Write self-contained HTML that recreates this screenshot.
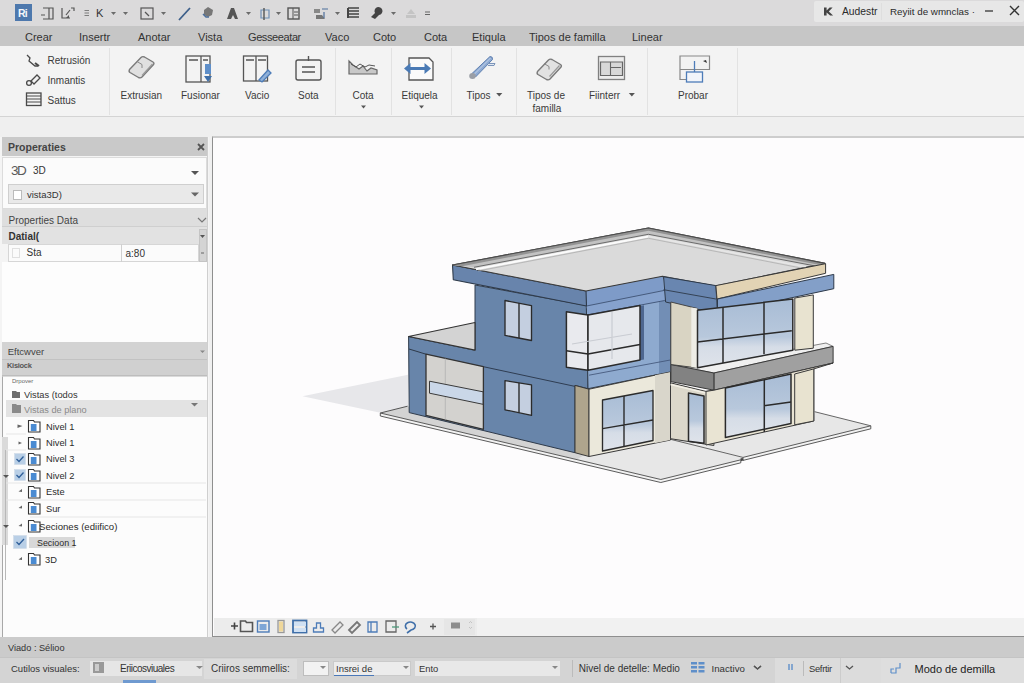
<!DOCTYPE html>
<html><head><meta charset="utf-8">
<style>
*{margin:0;padding:0;box-sizing:border-box}
html,body{width:1024px;height:683px;overflow:hidden;background:#f0f0f0;font-family:"Liberation Sans",sans-serif;color:#333}
.a{position:absolute}
.t{position:absolute;white-space:nowrap;font-size:10px;line-height:12px;color:#2a2a2a}
#qat{left:0;top:0;width:1024px;height:26px;background:#dbdadb}
#tabs{left:0;top:26px;width:1024px;height:20px;background:#c6c6c6}
#ribbon{left:0;top:46px;width:1024px;height:71px;background:#f3f3f3;border-bottom:1px solid #d4d4d4}
#strip{left:0;top:117px;width:1024px;height:20px;background:#efefef}
.sep{position:absolute;top:48px;width:1px;height:67px;background:#e2e2e2}
.tab{position:absolute;top:31px;font-size:11px;line-height:12px;color:#333;white-space:nowrap}
.rl{position:absolute;font-size:10px;line-height:12px;color:#3a3a3a;white-space:nowrap}
svg{position:absolute;overflow:visible}
.dd{position:absolute;font-size:8px;color:#666;line-height:8px}
</style></head><body>
<div id="qat" class="a"></div>
<div id="tabs" class="a"></div>
<div id="ribbon" class="a"></div>
<div id="strip" class="a"></div>

<!-- QAT -->
<div class="a" style="left:15px;top:4px;width:17px;height:17px;background:#4d78ad"></div>
<div class="a" style="left:18px;top:7.5px;color:#f4f6fa;font-size:10.5px;font-weight:bold;line-height:11px;letter-spacing:-0.8px">Ri</div>
<div class="t" style="left:96px;top:6.5px;font-size:11px;color:#333">K</div>
<svg style="left:0;top:0" width="1024" height="27">
 <g fill="none" stroke="#555" stroke-width="1.2">
  <path d="M43 8h10v11h-10M49 8v11M41 15h4"/>
  <path d="M62 8v10h8M66 15l4-5M71 8l3 0l0 3"/>
  <path d="M84.5 10.5h4.5M84.5 13h4.5M84.5 15.5h4.5" stroke-width="0.8" stroke="#666"/>
  
  <rect x="141" y="8" width="12" height="11"/>
  <path d="M145 12l4 4" />
  <path d="M179 20l11-12" stroke="#3d5f8a" stroke-width="1.8"/>
 </g>
 <path d="M66 18l3-3v3z" fill="#555"/>
 <g fill="#6b6b6b">
  <path d="M111 12h5l-2.5 3z"/><path d="M123 12h5l-2.5 3z"/><path d="M161 12h5l-2.5 3z"/>
  <path d="M246 12h5l-2.5 3z"/><path d="M276 12h5l-2.5 3z"/><path d="M335 12h5l-2.5 3z"/><path d="M391 12h5l-2.5 3z"/>
 </g>
 <g>
  <path d="M204 10l4-3 5 3-1 5-4 2-4-2z" fill="#777"/><path d="M203 14l3 3h3" fill="none" stroke="#4d6f9b" stroke-width="1.5"/>
  <path d="M227 19l4-11h3l4 11h-3l-2-4-2 4z" fill="#555"/>
  <path d="M261 10h8v8h-8z" fill="none" stroke="#6f8fb5" stroke-width="1.2"/><path d="M264 8v12" stroke="#555" stroke-width="1.4"/>
  <rect x="288" y="8" width="11" height="11" fill="none" stroke="#555" stroke-width="1.4"/><path d="M293 8v11M294 12h4M294 15h4" stroke="#555"/>
  <path d="M314 9h6v4h-6z" fill="#888"/><path d="M316 15h6l3 4h-9z" fill="#777"/><path d="M322 9h6M324 12v6" stroke="#4d6f9b" stroke-width="1.2"/>
  <path d="M348 8h11M348 11h11M348 14h11M348 17h11" stroke="#444" stroke-width="1.5"/><path d="M348 8v10" stroke="#444" stroke-width="2"/>
  <path d="M371 17l4-4a4 4 0 1 1 4 2l-4 4z" fill="#444"/>
  <path d="M406 18h10v-3h-10zM407 14l4-5 4 5z" fill="#c4c4c4"/>
  <path d="M425 12h5M425 14.5h5" stroke="#666" stroke-width="1"/>
 </g>
</svg>

<!-- title right -->
<div class="a" style="left:814px;top:1px;width:210px;height:21px;background:#e7e7e7;border-radius:2px"></div>
<div class="a" style="left:881px;top:3px;width:1px;height:17px;background:#dedede"></div>
<svg style="left:0;top:0" width="1024" height="27">
 <path d="M824 7.5v8h2.6v-3l3.5 3h3l-4.3-4 3.8-4h-3l-3 3v-3z" fill="#444"/>
 <path d="M985 11h8" stroke="#333" stroke-width="1.3"/>
 <path d="M1010 6l9 9M1019 6l-9 9" stroke="#333" stroke-width="1.4"/>
</svg>
<div class="t" style="left:842px;top:6px;font-size:10.3px">Audestr</div>
<div class="t" style="left:890px;top:6px;font-size:9.8px">Reyiit de wmnclas ·</div>

<!-- tabs -->
<div class="tab" style="left:25px">Crear</div>
<div class="tab" style="left:79px">Insertr</div>
<div class="tab" style="left:138px">Anotar</div>
<div class="tab" style="left:198px">Vista</div>
<div class="tab" style="left:248px;letter-spacing:-0.4px">Gesseeatar</div>
<div class="tab" style="left:325px">Vaco</div>
<div class="tab" style="left:373px">Coto</div>
<div class="tab" style="left:424px">Cota</div>
<div class="tab" style="left:472px">Etiqula</div>
<div class="tab" style="left:529px">Tipos de familla</div>
<div class="tab" style="left:632px">Linear</div>

<!-- ribbon separators -->
<div class="sep" style="left:109px"></div>
<div class="sep" style="left:335px"></div>
<div class="sep" style="left:391px"></div>
<div class="sep" style="left:451px"></div>
<div class="sep" style="left:516px"></div>
<div class="sep" style="left:647px"></div>
<div class="sep" style="left:737px"></div>

<!-- ribbon icons -->
<svg style="left:0;top:0" width="1024" height="120">
 <g fill="none" stroke="#4a4a4a" stroke-width="1.3">
  <!-- retrusion -->
  <path d="M27 55l3 3-1 3 6 5 3 0"/><path d="M35 63l4 3" stroke-width="2"/>
  <!-- imantis -->
  <circle cx="29" cy="83" r="2.4"/><path d="M31 81l6-6 3 3-6 6z"/>
  <!-- sattus -->
  <rect x="26.5" y="93" width="14.5" height="12.5"/><path d="M26.5 96h14.5M26.5 99h14.5M26.5 102h14.5" stroke-width="1"/>
 </g>
 <!-- extrusian eraser -->
 <path d="M129.5 69.5l11.5-12q1.5-1.5 3.5-0.5l8.5 5q1.5 1 0.5 2.5l-11.5 12.5q-1.5 1.5-3.5 0.5l-8.5-5q-1.5-1-0.5-3z" fill="#e0e0e0" stroke="#7a7a7a" stroke-width="1.4"/>
 <path d="M137 61.5l5 3v3.5" fill="none" stroke="#888" stroke-width="1"/>
 <path d="M142 75.5l10.5-11.5" stroke="#999" stroke-width="1.2"/>
 <!-- fusionar -->
 <g fill="none" stroke="#555" stroke-width="1.3">
  <rect x="186" y="56" width="24" height="26"/><path d="M201 56v26M189 60h9M203 60h5"/>
 </g>
 <path d="M205 64h6v10h-6z" fill="#5f8fc9"/><path d="M204 76h8l-4 6z" fill="#3f6fa9"/>
 <!-- vacio -->
 <g fill="none" stroke="#555" stroke-width="1.3">
  <rect x="243.5" y="56" width="24" height="25"/><path d="M256 56v25M246 60h8M258 60h8"/>
 </g>
 <path d="M259 80l9-10 3 3-9 9z" fill="#8fb0d8" stroke="#4d7cb8" stroke-width="1.3"/>
 <!-- sota -->
 <g fill="none" stroke="#555" stroke-width="1.4">
  <rect x="296" y="60" width="25" height="20" rx="2"/><path d="M302 67h13M302 72h13M308.5 56v5"/>
 </g>
 <!-- cota -->
 <path d="M349 61v13h28v-4l-6-2-4 3-4-5-4 3-6-4z" fill="#c8c8c8" stroke="#666" stroke-width="1.2"/>
 <path d="M351 64l5 3 4-3 5 3 4-2 6 1" fill="none" stroke="#555" stroke-width="1"/>
 <!-- etiquela -->
 <path d="M409 58h20l4 4v18h-24z" fill="#fafafa" stroke="#555" stroke-width="1.3"/>
 <path d="M404 68.5l6.5-5.5v4h14v-4l6.5 5.5-6.5 5.5v-4h-14v4z" fill="#4a7ab5"/>
 <!-- tipos -->
 <path d="M472 73.5L490 56.5Q493 56.5 492.5 59.5L475.5 77z" fill="#8eaad3" stroke="#5f80b0" stroke-width="1"/>
 <path d="M474 74.5L490.5 58" stroke="#c7d6ea" stroke-width="0.9"/>
 <path d="M488 63.5h7l-1 2h-6" fill="#dfe6f0" stroke="#6f8bb3" stroke-width="0.9"/>
 <ellipse cx="472.5" cy="76" rx="3.3" ry="3" fill="#9a9ea6"/>
 <!-- tipos de familla -->
 <path d="M537.5 71.5l11-11.5q1.5-1.5 3.5-0.5l8.5 5q1.5 1 0.5 2.5l-11 12q-1.5 1.5-3.5 0.5l-8.5-5q-1.5-1-0.5-3z" fill="#e2e2e2" stroke="#7a7a7a" stroke-width="1.4"/>
 <path d="M544 63.5l5 3v3" fill="none" stroke="#888" stroke-width="1"/>
 <path d="M549.5 76.5l10-11" stroke="#999" stroke-width="1.2"/>
 <!-- fiinterr -->
 <rect x="598.5" y="56.5" width="26" height="23" fill="#ececec" stroke="#808080" stroke-width="1.3"/>
 <path d="M600.5 62h22v13.5h-22z" fill="#d8d8d8" stroke="#666" stroke-width="1.2"/>
 <path d="M610.5 62v13.5M611 67.5h10" stroke="#666" stroke-width="1.1"/>
 <!-- probar -->
 <path d="M680 56h29.5v13.5h-29.5zM680 69.5v10h6" fill="#f2f2f2" stroke="#888" stroke-width="1.2"/>
 <path d="M694.5 61v11" stroke="#4d7cb8" stroke-width="1.3"/>
 <rect x="686.5" y="72" width="16" height="10" fill="#f2f5fa" stroke="#4d7cb8" stroke-width="1.3"/>
 <path d="M703 61l3-1 1 3z" fill="#333"/>
</svg>

<!-- ribbon labels -->
<div class="rl" style="left:47.5px;top:54.5px">Retrusión</div>
<div class="rl" style="left:47.5px;top:74.5px">Inmantis</div>
<div class="rl" style="left:47.5px;top:94.5px">Sattus</div>
<div class="rl" style="left:120.5px;top:89.5px">Extrusian</div>
<div class="rl" style="left:181px;top:89.5px">Fusionar</div>
<div class="rl" style="left:245px;top:89.5px">Vacio</div>
<div class="rl" style="left:298px;top:89.5px">Sota</div>
<div class="rl" style="left:352.5px;top:89.5px">Cota</div>

<div class="rl" style="left:401.5px;top:89.5px">Etiquela</div>

<div class="rl" style="left:466.5px;top:89.5px">Tipos</div>

<div class="rl" style="left:527px;top:89.5px">Tipos de</div>
<div class="rl" style="left:532.5px;top:103px">familla</div>
<div class="rl" style="left:589px;top:89.5px">Fiinterr</div>

<div class="rl" style="left:678px;top:89.5px">Probar</div>
<svg style="left:0;top:0" width="1024" height="120"><g fill="#555"><path d="M361 105.5h5l-2.5 3z"/><path d="M419 105.5h5l-2.5 3z"/><path d="M496.2 93h6.1l-3.05 3.6z"/><path d="M628.8 93h6.1l-3.05 3.6z"/></g></svg>

<!-- LEFT PANEL -->
<div class="a" style="left:0;top:137px;width:209px;height:500px;background:#f4f4f4"></div>
<div class="a" style="left:2px;top:137px;width:206px;height:19px;background:#c9c9c9"></div>
<div class="t" style="left:8px;top:141px;font-size:10.5px;font-weight:bold;color:#444">Properaties</div>
<svg style="left:0;top:0" width="220" height="160"><path d="M198 144l6 6M204 144l-6 6" stroke="#555" stroke-width="1.8"/></svg>
<div class="a" style="left:2px;top:157px;width:205px;height:52px;background:#fbfbfb;border:1px solid #dcdcdc"></div>
<div class="t" style="left:11px;top:164px;font-size:13.5px;line-height:14px;color:#5a5a5a;letter-spacing:-1.5px">3D</div>
<div class="t" style="left:33px;top:165px;font-size:10px;color:#333">3D</div>
<svg style="left:0;top:0" width="220" height="220"><path d="M191 171h8l-4 4z" fill="#555"/></svg>
<div class="a" style="left:8px;top:184px;width:196px;height:20px;background:#e9e9e9;border:1px solid #cfcfcf"></div>
<div class="a" style="left:12.5px;top:189.5px;width:9px;height:10px;background:#fff;border:1px solid #bbb"></div>
<div class="t" style="left:27px;top:188.5px;font-size:9.5px;color:#333">vista3D)</div>
<svg style="left:0;top:0" width="220" height="220"><path d="M191 192.5h8l-4 4z" fill="#666"/></svg>
<div class="a" style="left:2px;top:209px;width:206px;height:18px;background:#dedede;border-bottom:1px solid #cfcfcf"></div>
<div class="t" style="left:8.5px;top:215px;font-size:10px;color:#444">Properties Data</div>
<svg style="left:0;top:0" width="220" height="230"><path d="M198 218l4 4 4-4" fill="none" stroke="#777" stroke-width="1.2"/></svg>
<div class="a" style="left:2px;top:227px;width:206px;height:17px;background:#e2e2e2"></div>
<div class="t" style="left:8.5px;top:231px;font-size:10px;font-weight:bold;color:#333">Datial(</div>
<div class="a" style="left:8px;top:244px;width:191px;height:18px;background:#fbfbfb;border:1px solid #d6d6d6"></div>
<div class="a" style="left:121px;top:244px;width:1px;height:18px;background:#d0d0d0"></div>
<div class="a" style="left:12px;top:247.5px;width:8px;height:10px;border:1px solid #e0e0e0"></div>
<div class="t" style="left:26.5px;top:247px;font-size:10px;color:#333">Sta</div>
<div class="t" style="left:125.5px;top:247.5px;font-size:10px;color:#333">a:80</div>
<div class="a" style="left:198.5px;top:229px;width:8px;height:33px;background:#d4d4d4;border:1px solid #c4c4c4"></div>
<svg style="left:0;top:0" width="220" height="270"><path d="M200 235h5l-2.5 3z" fill="#555"/><path d="M201 253h3" stroke="#666"/></svg>
<div class="a" style="left:2px;top:262px;width:206px;height:80px;background:#fdfdfd"></div>
<!-- project browser -->
<div class="a" style="left:2px;top:342px;width:206px;height:18px;background:#d3d3d3;border-bottom:1px solid #c2c2c2"></div>
<div class="t" style="left:7.7px;top:345.5px;font-size:9.5px;color:#444">Eftcwver</div>
<svg style="left:0;top:0" width="220" height="380"><path d="M200 350.5h5l-2.5 2.5z" fill="#888"/><path d="M199 366l3.5 3 3.5-3" fill="none" stroke="#777" stroke-width="1"/></svg>
<div class="a" style="left:2px;top:360px;width:206px;height:16px;background:#d0d0d0;border-bottom:1px solid #bdbdbd"></div>
<div class="t" style="left:7px;top:359.5px;font-size:7.5px;font-weight:bold;color:#555;letter-spacing:-0.3px">Kisiock</div>
<div class="a" style="left:2px;top:376px;width:206px;height:261px;background:#fcfcfc;border-left:1px solid #a8a8a8;border-top:1px solid #dadada"></div>
<div class="a" style="left:2px;top:437px;width:6px;height:108px;background:#dadada"></div>
<div class="a" style="left:5px;top:450px;width:1px;height:130px;background:#b8b8b8"></div>
<div class="t" style="left:12px;top:378px;font-size:6px;line-height:7px;color:#666">Drpover</div>
<svg style="left:0;top:0" width="220" height="640">
 <path d="M12 391h4l1 1h3v6h-8z" fill="#6d6d6d"/>
 <path d="M12 405h4l1 1h4v8h-9z" fill="#8a8a8a"/>
</svg>
<div class="t" style="left:24px;top:389px;font-size:9.3px;color:#333">Vistas (todos</div>
<div class="a" style="left:6px;top:400px;width:202px;height:17px;background:#e3e3e3"></div>
<svg style="left:0;top:0" width="220" height="640">
 <path d="M12 404h4l1 1h4v8h-9z" fill="#8a8a8a"/>
 <path d="M191 403h7l-3.5 3.5z" fill="#777"/>
</svg>
<div class="t" style="left:24px;top:404px;font-size:9.2px;color:#8a8a8a">Vistas de plano</div>
<svg style="left:0;top:0" width="220" height="640">
 <g fill="#666">
  <path d="M17.5 424.5l5 1.5-5 2z"/><path d="M18.5 441.5l3.5 1.5-3.5 1.5z"/>
  <path d="M18.5 491.5l3.5-2.5v3z"/><path d="M18.5 508l3.5-2.5v3z"/><path d="M18.5 526l3.5-2.5v3z"/><path d="M18.5 559.5l3.5-2.5v3z"/>
  <path d="M3 475h6l-3 3z" fill="#555"/><path d="M3 525h6l-3 3z" fill="#555"/>
 </g>
 <g id="ic">
 </g>
 <g fill="#b9cfe6" stroke="#cfdbe8" stroke-width="0.6">
  <rect x="14.5" y="453.5" width="11" height="11"/><rect x="14.5" y="469.5" width="11" height="11"/><rect x="13.5" y="535.5" width="13" height="13"/>
 </g>
 <g fill="none" stroke="#2f5f9a" stroke-width="1.3">
  <path d="M16.5 459l2.5 2.5 4.5-5"/><path d="M16.5 475l2.5 2.5 4.5-5"/><path d="M16.5 542l2.5 2.5 5-5.5"/>
 </g>
</svg>
<svg style="left:0;top:0" width="220" height="640">
 <defs><g id="sheet"><path d="M0.5 0.5h5l1 1.5h5.5v10h-11.5z" fill="#fff" stroke="#333" stroke-width="1.1"/><rect x="2.8" y="4" width="5.7" height="7" fill="#4a8bd2"/></g></defs>
 <use href="#sheet" x="28" y="420"/>
 <use href="#sheet" x="28" y="437"/>
 <use href="#sheet" x="28" y="453"/>
 <use href="#sheet" x="28" y="469"/>
 <use href="#sheet" x="28" y="486"/>
 <use href="#sheet" x="28" y="502"/>
 <use href="#sheet" x="28" y="520"/>
 <use href="#sheet" x="28" y="553"/>
 <path d="M6 434h20M6 450h20M6 483h200M6 500h200M30 517h176" stroke="#e6e6e6" stroke-width="1"/>
</svg>
<div class="a" style="left:28.7px;top:536.5px;width:46px;height:11.5px;background:#d8d8d8"></div>
<div class="t" style="left:46px;top:420.5px;font-size:9.3px">Nivel 1</div>
<div class="t" style="left:46px;top:437px;font-size:9.3px">Nivel 1</div>
<div class="t" style="left:46px;top:453px;font-size:9.3px">Nivel 3</div>
<div class="t" style="left:46px;top:469.5px;font-size:9.3px">Nivel 2</div>
<div class="t" style="left:46px;top:486px;font-size:9.3px">Este</div>
<div class="t" style="left:46px;top:502.5px;font-size:9.3px">Sur</div>
<div class="t" style="left:39px;top:520.5px;font-size:9.6px">Seciones (ediifico)</div>
<div class="t" style="left:37px;top:536.5px;font-size:8.9px">Secioon 1</div>
<div class="t" style="left:45px;top:553.5px;font-size:9.3px">3D</div>
<div class="a" style="left:207px;top:137px;width:1px;height:500px;background:#cfcfcf"></div>

<!-- VIEWPORT -->
<div class="a" style="left:212px;top:136px;width:812px;height:501px;background:#fdfcfd;border-left:1px solid #8f8f8f;border-top:2px solid #cdcdcd;border-bottom:1px solid #8f8f8f"></div>
<svg id="house" style="left:0;top:0" width="1024" height="683" stroke-linejoin="round">
 <defs>
  <linearGradient id="gl" x1="0" y1="0" x2="0" y2="1"><stop offset="0" stop-color="#a8bcd5"/><stop offset="0.55" stop-color="#b8c8dc"/><stop offset="0.7" stop-color="#d6dde7"/><stop offset="1" stop-color="#dfe3ea"/></linearGradient>
  <linearGradient id="gw" x1="0" y1="0" x2="0" y2="1"><stop offset="0" stop-color="#eceef2"/><stop offset="1" stop-color="#e2e5ea"/></linearGradient>
 </defs>
 <!-- shadow -->
 <path d="M302.5 396.3L408 374.8V407L380.4 412.7z" fill="#e7e7ea"/>
 <!-- plinth / slabs -->
 <path d="M380.3 413L407.6 406.2L589 448L589 460L577 459.6z" fill="#d3d3d3"/>
 <path d="M577 459.6L589 452L670 436L743 457.4L740.8 459.8L660.8 479.5z" fill="#e7e7e7"/>
 <path d="M743 457.4L700 445L813.8 418L814.6 411.7L870.8 425.8z" fill="#e7e7e7"/>
 <path d="M380.3 413L660.8 479.5L740.8 459.8V462.8L660.8 482.5L380.3 416z" fill="#f2f2f2" stroke="#4a4a4a" stroke-width="0.9"/>
 <path d="M743 457.4L870.8 425.8V428.8L743 460.4z" fill="#f2f2f2" stroke="#4a4a4a" stroke-width="0.9"/>
 <path d="M380.3 413L407.6 406.2" stroke="#555" stroke-width="1"/>
 <path d="M814.6 411.7L870.8 425.8" stroke="#666" stroke-width="1"/>
 <path d="M668 438.7L743 457.4" stroke="#666" stroke-width="1"/>
 <path d="M740.8 460l2.2-1" stroke="#444" stroke-width="2.5"/>

 <!-- main left face blue -->
 <path d="M408.6 336.5L475 350.2V285L587 305.6L588 388.7L575 385.4V452.7L409.2 412.6z" fill="#6885aa" stroke="#2e3a4a" stroke-width="1"/>
 <!-- garage low roof -->
 <path d="M408.6 336.5L475 322.5V350.2z" fill="#d3d3d3" stroke="#333" stroke-width="1.2"/>
 <path d="M409 349L426 354.2" stroke="#2e3a4a" stroke-width="1"/>
 <path d="M483.4 366.7L575.5 386.5" fill="none" stroke="#2f3d52" stroke-width="1"/>
 <!-- garage door -->
 <path d="M426 354.2L483.4 366.7V429.3L426 415.4z" fill="#d3d2cf" stroke="#333" stroke-width="1.3"/>
 <path d="M445.3 358.5V419.6" stroke="#b0b0b0" stroke-width="0.8"/>
 <path d="M429.5 381.2L483 391.8V404.3L429.5 393.2z" fill="#cad7e8" stroke="#3a3a3a" stroke-width="1"/>
 <!-- small windows -->
 <path d="M505 300.5L531.5 305.6V340.5L505 335.4z" fill="#c4cfe0" stroke="#2b2b2b" stroke-width="1.35"/>
 <path d="M519 303v35" stroke="#2b2b2b" stroke-width="1.4"/>
 <path d="M505 380.6L531.5 384.8V415.4L505 409.8z" fill="#c4cfe0" stroke="#2b2b2b" stroke-width="1.35"/>
 <path d="M519 382.7v30" stroke="#2b2b2b" stroke-width="1.4"/>

 <!-- main front face blue (upper) -->
 <path d="M586 291L662.5 276.3L670.5 290V371.9L588 388.7z" fill="#8eaacf" stroke="#2e3a4a" stroke-width="1"/>
 <path d="M659 299.5L670.5 297.5V371.9L659 374.3z" fill="#728eb5"/>
 <path d="M586 291L662.5 276.3L664 290.3L586.5 306z" fill="#7e9bc8"/>
 <path d="M586.5 306L664.8 290.3V300.5L588 314.9z" fill="#86a2cd"/>
 <path d="M586.5 306L664.8 290.3M588 314.9L664.8 300.5" stroke="#3d5173" stroke-width="0.9"/>
 <path d="M639.5 306L644 305.2V359.5L639.5 360.2z" fill="#4e6790"/>
 <!-- corner window -->
 <path d="M566.4 311.8L588 314.9V370.2L566.4 367.2z" fill="#e9eaee" stroke="#2b2b2b" stroke-width="1.5"/>
 <path d="M588 314.9L640 305.6V360L588 370.2z" fill="#e6e8ec" stroke="#2b2b2b" stroke-width="1.5"/>
 <path d="M566.4 350.8L588 354L640 344.6" fill="none" stroke="#2b2b2b" stroke-width="1.5"/>
 <path d="M612 312v47M572 344l60-10" stroke="#c9ccd2" stroke-width="1.2"/>
 <path d="M589 375.2L670.3 360" stroke="#3d5173" stroke-width="0.8"/>

 <!-- lower beige block -->
 <path d="M575 385.4L589 389.2V456.5L575 452.7z" fill="#afa58d" stroke="#3a3a3a" stroke-width="1"/>
 <path d="M589 389.2L670.5 371.9V440L589 456.5z" fill="#ebe8db" stroke="#3a3a3a" stroke-width="1"/>
 <path d="M655 375.3L670 372.2V440L655 443z" fill="#d9d6cb"/>
 <path d="M602.5 400L653 390.5V440.5L602.5 451z" fill="url(#gl)" stroke="#2b2b2b" stroke-width="1.35"/>
 <path d="M624 396v51M602.5 428.6L653 420" stroke="#2b2b2b" stroke-width="1.4"/>
 

 <!-- roof fascia left face -->
 <path d="M452.5 265L586 291L586.5 306L453.3 279.7z" fill="#6884ac" stroke="#2e3a4a" stroke-width="1.1"/>
 <!-- roof top -->
 <path d="M452.5 265L648.4 228L825 263.4L715.3 286L662.5 276.3L586 291z" fill="#dadada" stroke="#3a3a3a" stroke-width="1.1"/>
 <path d="M452.5 265L648.4 228L825 263.4L818 266.5L648.4 234.3L474 267.3z" fill="#c2c2c2"/>
 <path d="M452.5 265L648.4 228L825 263.4L821 265.3L648.4 230.8L462 266.2z" fill="#939393"/>
 <path d="M474 267.3L648.4 234.3L818 266.5" fill="none" stroke="#5f5f5f" stroke-width="0.9"/>
 <path d="M476 269.2L648.4 236.4" fill="none" stroke="#fbfbfb" stroke-width="2"/>
 <path d="M648.4 236.4L806 267" fill="none" stroke="#e6e6e6" stroke-width="1.6"/>
 <path d="M478 271L648.4 238.3L800 267.8" fill="none" stroke="#a8a8a8" stroke-width="0.7"/>
 <path d="M452.5 265L648.4 228L825 263.4" fill="none" stroke="#4a4a4a" stroke-width="1.1"/>

 <!-- wing fascia -->
 <path d="M663.6 276.8L715.9 285.6L717.5 313.7L665.6 302z" fill="#6986b0" stroke="#2e3a4a" stroke-width="1"/>
 <path d="M663.6 289.7L715.9 299" stroke="#2e3a4a" stroke-width="0.9"/>
 <path d="M715.9 285.6L825.6 263.7V273.3L717 299z" fill="#e2d3b4" stroke="#3a3a3a" stroke-width="1"/>
 <path d="M717.5 299L833.8 274.4V288.7L717.5 313.7z" fill="#839fc8" stroke="#2e3a4a" stroke-width="1"/>

 <!-- balcony slab -->
 <path d="M670.9 364.5L713.9 373L833.1 346.4L826 343L697.5 367.5z" fill="#efefef" stroke="#666" stroke-width="0.8"/>
 <path d="M713.9 373L833.1 346.4V363L713.9 390.2z" fill="#a0a0a0" stroke="#3a3a3a" stroke-width="1"/>
 <path d="M670.9 364.5L713.9 373V390.2L670.9 381.6z" fill="#828282" stroke="#3a3a3a" stroke-width="1"/>

 <!-- wing upper -->
 <path d="M670.8 302L697.5 308.5V368L670.8 364.5z" fill="#d9d4c3" stroke="#3a3a3a" stroke-width="0.9"/>
 <path d="M691.3 307.5L697.5 308.5V368L691.3 367z" fill="#eeede6"/>
 <path d="M697.5 310.2L792.8 299V350.2L697.5 367.7z" fill="url(#gl)" stroke="#2b2b2b" stroke-width="1.5"/>
 
 <path d="M723 307v56M764 302v52M697.5 342L791.8 330.7" stroke="#2b2b2b" stroke-width="1.5"/>
 <path d="M794.8 298L813.3 294.9V348.2L794.8 350.2z" fill="#e8e3d0" stroke="#3a3a3a" stroke-width="1"/>

 <!-- wing lower -->
 <path d="M670.5 382.8L706 391.4L713.9 390.2V445.5L670.5 438.7z" fill="#dcd8cb" stroke="#3a3a3a" stroke-width="1"/>
 <path d="M670.5 384.5L706 393" stroke="#f2efe6" stroke-width="1.5"/>
 <path d="M688.5 393L704 396V443.3L688.5 441.3z" fill="url(#gl)" stroke="#2b2b2b" stroke-width="1.5"/>
 <path d="M706 391.4L713.9 390.2L833.1 363L813.8 368.9V421L706 445z" fill="#e9e4d3" stroke="#3a3a3a" stroke-width="1"/>
 <path d="M725.4 388L791 374V423.5L725.4 437.5z" fill="url(#gl)" stroke="#2b2b2b" stroke-width="1.5"/>
 
 <path d="M764.3 380v52M764 405.7L791 401.9" stroke="#2b2b2b" stroke-width="1.5"/>
 <path d="M794.7 374L813.8 368.9V421L794.7 424.8z" fill="#e8e3d0" stroke="#3a3a3a" stroke-width="1"/>
</svg>
<div class="a" style="left:214px;top:618px;width:810px;height:18px;background:#f1f1f1"></div>
<div class="a" style="left:214px;top:618px;width:263px;height:18px;background:#ececec"></div>
<svg style="left:0;top:0" width="1024" height="683">
 <g fill="none" stroke-width="1.3">
  <path d="M231 626h7M234.5 622.5v7" stroke="#444" stroke-width="1.6"/>
  <path d="M240.5 621h5l1 1.5h6v9h-12z" stroke="#555" stroke-width="1.6"/>
  <rect x="257.5" y="621" width="11.5" height="11" stroke="#4d7cb8" stroke-width="1.4"/>
  <rect x="278" y="620.5" width="6" height="12" stroke="#999"/>
  <rect x="293" y="620.5" width="13.5" height="12" stroke="#3f6fa9" stroke-width="1.8"/>
  <path d="M313.5 632v-4h3v-5h4v5h3v4z" stroke="#4d7cb8"/>
  <path d="M332 630l8-8 3 3-8 8z" stroke="#888"/>
  <path d="M349 630l8-8 3 3-8 8z" stroke="#777" stroke-width="1.8"/>
  <path d="M368 622h9v10h-9zM371 622v10" stroke="#4d7cb8"/>
  <path d="M386 621h10v11h-10z" stroke="#666"/><path d="M392 627h7" stroke="#4d9a7a"/>
  <path d="M407 629a5 4 0 1 1 4 1l-4 3" stroke="#3f6fa9" stroke-width="1.6"/>
  <path d="M430 626.5h6M433 623.5v6" stroke="#555"/>
 </g>
 <path d="M259.5 624h7v6h-7z" fill="#7ea6d6"/>
 <path d="M279 621.5h4v10h-4z" fill="#efd79a"/>
 <path d="M294 622h12v4h-12zM294 628h12v4h-12z" fill="#cfe0f3"/>
 <rect x="444" y="619" width="31" height="16" fill="#e6e6e6"/>
 <rect x="451" y="622.5" width="9" height="6" fill="#8d8d8d"/>
 <path d="M469 623l1.5-1.5 1.5 1.5M469 627l1.5 1.5 1.5-1.5" stroke="#bbb" fill="none" stroke-width="0.8"/>
</svg>

<!-- STATUS -->
<div class="a" style="left:0;top:637px;width:1024px;height:21px;background:#cbcbcb"></div>
<div class="t" style="left:8px;top:642px;font-size:9.2px;color:#333">Viado : Sélioo</div>
<div class="a" style="left:0;top:657px;width:1024px;height:26px;background:#d4d4d4;border-top:1px solid #c4c4c4"></div>
<div class="t" style="left:11px;top:662.5px;font-size:9.5px;color:#333">Cutilos visuales:</div>
<div class="a" style="left:90px;top:660.5px;width:111.5px;height:15.5px;background:#e6e6e6"></div>
<svg style="left:0;top:0" width="1024" height="683"><rect x="93" y="662" width="11" height="11" fill="#999"/><rect x="95" y="664" width="4" height="7" fill="#ccc"/></svg>
<div class="t" style="left:120px;top:663px;font-size:10px;color:#333;letter-spacing:-0.5px">Eriicosviuales</div>
<div class="a" style="left:123px;top:680px;width:33px;height:3px;background:#6f9ad0"></div>
<div class="a" style="left:204px;top:659px;width:93px;height:20px;background:#dcdcdc"></div>
<div class="t" style="left:211px;top:662.5px;font-size:10px;color:#333">Criiros semmellis:</div>
<div class="a" style="left:303px;top:660.5px;width:26px;height:15px;background:#f2f2f2;border:1px solid #bdbdbd"></div>
<div class="a" style="left:333px;top:660.5px;width:78px;height:15px;background:#ececec;border:1px solid #cacaca"></div>
<div class="a" style="left:334px;top:674.5px;width:40px;height:1.2px;background:#4a78b8"></div>
<div class="t" style="left:336px;top:663px;font-size:9.5px;color:#333">Insrei de</div>
<div class="a" style="left:415px;top:660.5px;width:145px;height:15px;background:#e8e8e8"></div>
<div class="t" style="left:419px;top:663px;font-size:9.4px;color:#333">Ento</div>
<div class="a" style="left:572px;top:660px;width:1px;height:17px;background:#bbb"></div>
<div class="t" style="left:578.75px;top:663px;font-size:10px;color:#333">Nivel de detelle: Medio</div>
<svg style="left:0;top:0" width="1024" height="683">
 <g fill="#888"><path d="M196 666h7l-3.5 3z"/><path d="M320 666h6l-3 3z"/><path d="M403 666h6l-3 3z"/><path d="M552 666h6l-3 3z"/></g>
 <g fill="#5f8fc9"><rect x="691" y="662" width="6" height="2.5"/><rect x="698.5" y="662" width="6" height="2.5"/><rect x="691" y="666" width="6" height="2.5"/><rect x="698.5" y="666" width="6" height="2.5"/><rect x="691" y="670" width="6" height="2.5"/><rect x="698.5" y="670" width="6" height="2.5"/></g>
 <path d="M754 666l3.5 3 3.5-3M846 666l3.5 3 3.5-3" fill="none" stroke="#555" stroke-width="1.3"/>
 <path d="M789 664v6M792 664v6" stroke="#5f8fc9" stroke-width="1.4"/>
 <path d="M891 673h5v-5h4v-5M891 673v-4h3" fill="none" stroke="#5f8fc9" stroke-width="1.2"/>
</svg>
<div class="a" style="left:775px;top:658px;width:106px;height:25px;background:#dcdcdc"></div>
<div class="a" style="left:803px;top:661px;width:1px;height:15px;background:#bbb"></div>
<div class="a" style="left:840px;top:658px;width:1px;height:25px;background:#ccc"></div>
<div class="a" style="left:881px;top:658px;width:143px;height:25px;background:#dedede"></div>
<div class="t" style="left:711.5px;top:663px;font-size:9.7px;color:#333">Inactivo</div>
<div class="t" style="left:809px;top:663px;font-size:9.4px;color:#333;letter-spacing:-0.3px">Sefrtir</div>
<div class="t" style="left:914.5px;top:662.5px;font-size:11px;color:#222">Modo de demilla</div>
<svg style="left:0;top:0" width="1024" height="683">
 <path d="M754 666l3.5 3 3.5-3M846 666l3.5 3 3.5-3" fill="none" stroke="#555" stroke-width="1.3"/>
 <path d="M789 664v6M792 664v6" stroke="#5f8fc9" stroke-width="1.4"/>
 <path d="M891 673h5v-5h4v-5M891 673v-4h3" fill="none" stroke="#5f8fc9" stroke-width="1.2"/>
</svg>

</body></html>
